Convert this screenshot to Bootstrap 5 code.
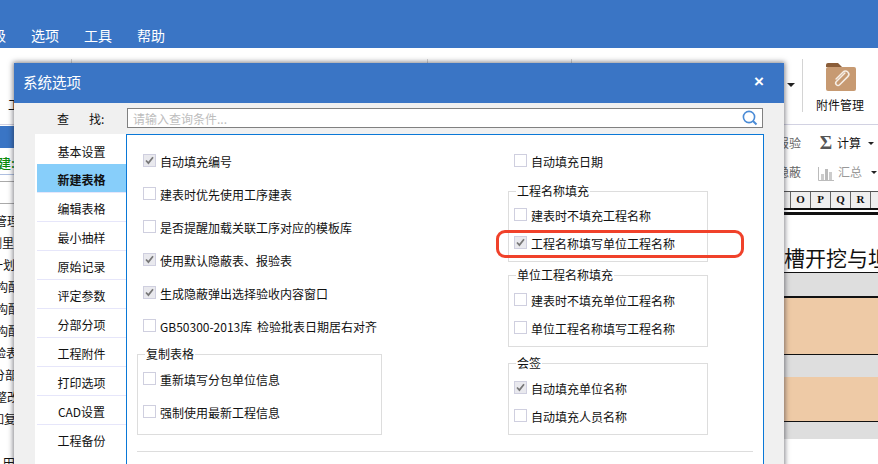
<!DOCTYPE html>
<html lang="zh">
<head>
<meta charset="utf-8">
<title>系统选项</title>
<link href="https://cdn.jsdelivr.net/npm/bootstrap@5.3.0/dist/css/bootstrap.min.css" rel="stylesheet">
<style>
html,body{margin:0;height:464px;width:878px;overflow:hidden;background:#fff}
body{font-family:"Noto Sans CJK SC","Liberation Sans",sans-serif;font-size:12px;line-height:16px;color:#111;position:relative}
.menu-strip{height:48px;background:#3a75c5;color:#fff;font-size:14px;line-height:20px;gap:25px;padding:0 0 3px 0;margin-left:-8px}
.ribbon-strip{height:77px;border-bottom:1px solid #d2d2e2;padding-top:11px}
.rb-sep{width:1px;height:53px;background:#d4d4d4;flex:none}
.rb-first{width:12px;margin:38px 0 0 8px;flex:none}
.rb-s1{margin-left:51px}.rb-s2{margin-left:355px}.rb-s3{margin-left:143px}
.rb-tri{margin:24px 7px 0 215px;width:0;height:0;border-left:4px solid transparent;border-right:4px solid transparent;border-top:4px solid #222;flex:none}
.rb-attach{width:50px;margin-left:13px;flex:none;padding-top:4px}
.rb-attach svg{display:block;margin:0 0 6px 10px}
.work-area{height:339px}
.left-strip{width:14px;flex:none;overflow:hidden;white-space:nowrap}
.ls-blue{height:22px;background:#3a75c5;margin-top:1px}
.ls-green{color:#0a8a0a;font-size:13px;line-height:16px;margin:7px 0 3px -2px;font-weight:500}
.ls-line1{height:1px;background:#aebfe0;margin-top:0}
.ls-line2{height:23px;border-top:1px solid #aaa;border-bottom:1px solid #aaa;margin-top:6px}
.ls-rows{padding-top:6px}
.ls-row{height:22px;line-height:22px}
.sh3{margin-left:3px}.sh4{margin-left:-4px}.sh5{margin-left:-5px}.sh6{margin-left:-6px}.sh7{margin-left:-7px}.sh8{margin-left:-8px}.sh9{margin-left:-9px}.sh10{margin-left:-10px}
.mid-gap{width:770px;flex:none}
.right-strip{width:94px;flex:none;overflow:hidden;white-space:nowrap}
.tool-row{height:18px;line-height:18px}
.tool-row.r1{margin-top:9px}.tool-row.r2{margin-top:11px}
.tool-cut{margin-left:-7px;width:24px;flex:none;color:#666}
.tool-ic{margin-left:17px;width:16px;flex:none;text-align:center}
.sigma{font-family:"Liberation Serif",serif;font-size:19px;font-weight:700;color:#555}
.tool-lab{margin-left:3px;width:24px;flex:none}
.tool-gray{color:#999;margin-left:4px}
.tool-tri{width:0;height:0;border-left:3px solid transparent;border-right:3px solid transparent;border-top:3px solid #222;margin-left:7px}
.tool-row.r2 .tool-tri{margin-left:9px}
.col-heads{height:17px;margin-top:10px;border-top:1px solid #555;background:#efefef;font-family:"Liberation Serif",serif;font-weight:700;font-size:11px;line-height:15px;text-align:center}
.col-heads span{width:20px;flex:none;border-right:1px solid #666}
.col-heads span:first-child{width:7px}
.col-heads span:last-child{border-right:0}
.thick-lines{height:7px;border-top:2px solid #111;border-bottom:3px solid #111}
.doc-title{height:58px;border-bottom:1px solid #111;font-size:21px;line-height:28px;padding-top:28px;color:#111}
.doc-gray{background:#dedede}
.doc-peach{background:#eecaa6}
.dg1{height:23px;border-bottom:2px solid #111;box-sizing:content-box}
.dp1{height:56px;border-bottom:1px solid #111;box-sizing:content-box}
.dg2{height:22px}
.dp2{height:44px;border-bottom:1px solid #111;box-sizing:content-box}
.dg3{height:17px}

.opt-dialog{position:absolute;left:14px;top:63px;width:770px;height:410px;background:#f0f0f0;box-shadow:0 0 5px 1px rgba(30,30,40,.55)}
.dlg-head{height:40px;background:#3a75c5;color:#fff;font-size:14.5px;padding:0 20px 2px 9px}
.dlg-x{font-size:17px;line-height:20px;font-family:"Liberation Sans",sans-serif;font-weight:700}
.find-row{height:31px;padding-top:5px}
.find-lab{width:113px;flex:none;padding:3px 0 0 43px;white-space:nowrap}
.find-gap{display:inline-block;width:20px}
.find-box{width:636px;height:20px;border:1px solid #808080;background:#fff;flex:none;padding:0 4px 0 5px;color:#bdbdbd;line-height:19px}
.dlg-main{height:340px;padding-left:21px}
.nav-pane{width:91px;flex:none;background:#fff;padding:2px 0 0 2px}
.nav-entry{height:29px;border:0;border-left:1px solid #e6e6fa;border-bottom:1px solid #e6e6fa;background:#fff;text-align:center;line-height:31px;color:#111;padding:0;border-radius:0!important;font-size:12px}
.nav-entry.active{background:#87cefa;font-weight:700;color:#111;border-color:#e6e6fa}
.opt-pane{width:638px;flex:none;background:#fff;border:1px solid #0a78d7;padding:19px 0 0 10px}
.opt-left{width:245px;flex:none}
.opt-right{width:200px;margin-left:126px;flex:none}
.opt-line{height:13px;margin:0 0 20px;padding:0;min-height:0;gap:4px;white-space:nowrap}
.opt-line .form-check-input{width:13px;height:13px;margin:0;flex:none;float:none;border:1px solid #cfcfdf;border-radius:0;background-color:#fff;box-shadow:none}
.opt-line .form-check-input:checked{background-color:#e9e9ee;border-color:#cfcfdf;background-size:13px 13px;background-image:url("data:image/svg+xml,%3csvg xmlns='http://www.w3.org/2000/svg' viewBox='0 0 13 13'%3e%3cpath fill='none' stroke='%23777' stroke-width='1.7' d='M3 6.5l2.4 2.6L10 3.2'/%3e%3c/svg%3e")}
.opt-line .form-check-label{line-height:16px;margin-top:3px;word-spacing:2px}
.pad6{padding-left:6px}
.opt-set{border:1px solid #ddd;margin:0;padding:0 0 0 5px;min-width:0}
.opt-set legend{float:none;width:auto;font-size:12px;line-height:16px;margin:0 0 0 2px;padding:0 1px}
.set-copy{margin-top:-6px;height:89px}
.set-a{margin-top:-4px;height:79px}
.set-b{margin-top:5px;height:80px}
.set-c{margin-top:8px;height:80px}
.set-copy .opt-line:first-of-type{margin-top:10px}
.set-a .opt-line,.set-b .opt-line,.set-c .opt-line{margin-bottom:15px}
.set-a .opt-line:first-of-type{margin-top:9px}
.set-b .opt-line:first-of-type{margin-top:10px}
.set-c .opt-line:first-of-type{margin-top:10px}
.red-ring{position:absolute;left:-18px;top:-6px;width:248px;height:28px;border:3px solid #f0412a;border-radius:9px}
.ring-host{position:relative}
.opt-rule{height:1px;background:#ddd;margin:16px 10px 0 0}
</style>
</head>
<body>
<div class="menu-strip d-flex align-items-end">
  <span>级</span><span>选项</span><span>工具</span><span>帮助</span>
</div>
<div class="ribbon-strip d-flex align-items-start">
  <span class="rb-first">工</span>
  <span class="rb-sep rb-s1"></span>
  <span class="rb-sep rb-s2"></span>
  <span class="rb-sep rb-s3"></span>
  <span class="rb-tri"></span>
  <span class="rb-sep"></span>
  <div class="rb-attach">
    <svg width="30" height="28" viewBox="0 0 30 28">
      <path d="M0 2a2 2 0 0 1 2-2h10l4 4H0z" fill="#8a5d38"/>
      <rect x="0" y="4" width="30" height="24" rx="2" fill="#c79a72"/>
      <g transform="translate(15 16) rotate(-45)"><path d="M7 -1.500H-5a2.300 2.300 0 0 0 0 4.600H6.500a3.300 3.300 0 0 0 0-6.600H-3.500" fill="none" stroke="#f6eee6" stroke-width="1.500" stroke-linecap="round"/></g>
    </svg>
    附件管理
  </div>
</div>
<div class="work-area d-flex">
  <div class="left-strip">
    <div class="ls-blue"></div>
    <div class="ls-green">建:</div>
    <div class="ls-line1"></div>
    <div class="ls-line2"></div>
    <div class="ls-rows">
      <div class="ls-row sh5">管理</div>
      <div class="ls-row sh10">测里</div>
      <div class="ls-row sh9">一划</div>
      <div class="ls-row sh4">构配</div>
      <div class="ls-row sh4">构配</div>
      <div class="ls-row sh4">构配</div>
      <div class="ls-row sh6">验表</div>
      <div class="ls-row sh7">分部</div>
      <div class="ls-row sh5">整改</div>
      <div class="ls-row sh8">如复</div>
      <div class="ls-row"></div>
      <div class="ls-row sh3">田</div>
    </div>
  </div>
  <div class="mid-gap"></div>
  <div class="right-strip">
    <div class="tool-row r1 d-flex align-items-center">
      <span class="tool-cut">报验</span>
      <span class="tool-ic sigma">Σ</span>
      <span class="tool-lab">计算</span>
      <span class="tool-tri"></span>
    </div>
    <div class="tool-row r2 d-flex align-items-center">
      <span class="tool-cut">隐蔽</span>
      <span class="tool-ic">
        <svg width="16" height="14" viewBox="0 0 16 14"><path d="M.5 0v13.500H16" fill="none" stroke="#bbb"/><rect x="3" y="7" width="3" height="6" fill="#ccc"/><rect x="7" y="2" width="3" height="11" fill="#bbb"/><rect x="11" y="5" width="3" height="8" fill="#ccc"/></svg>
      </span>
      <span class="tool-lab tool-gray">汇总</span>
      <span class="tool-tri"></span>
    </div>
    <div class="col-heads d-flex"><span></span><span>O</span><span>P</span><span>Q</span><span>R</span><span>:</span></div>
    <div class="thick-lines"></div>
    <div class="doc-title">槽开挖与坦</div>
    <div class="doc-gray dg1"></div>
    <div class="doc-peach dp1"></div>
    <div class="doc-gray dg2"></div>
    <div class="doc-peach dp2"></div>
    <div class="doc-gray dg3"></div>
  </div>
</div>

<div class="opt-dialog">
  <div class="dlg-head d-flex align-items-center justify-content-between">
    <span>系统选项</span><span class="dlg-x">×</span>
  </div>
  <div class="find-row d-flex">
    <div class="find-lab">查<span class="find-gap"></span>找:</div>
    <div class="find-box d-flex align-items-center justify-content-between">
      <span>请输入查询条件...</span>
      <svg width="16" height="16" viewBox="0 0 16 16"><circle cx="7" cy="7" r="5.600" fill="none" stroke="#4a8bd6" stroke-width="1.600"/><path d="M11 11l3.500 3.500" stroke="#4a8bd6" stroke-width="2"/></svg>
    </div>
  </div>
  <div class="dlg-main d-flex">
    <div class="nav-pane">
      <div class="list-group list-group-flush">
        <div class="list-group-item nav-entry">基本设置</div>
        <div class="list-group-item nav-entry active">新建表格</div>
        <div class="list-group-item nav-entry">编辑表格</div>
        <div class="list-group-item nav-entry">最小抽样</div>
        <div class="list-group-item nav-entry">原始记录</div>
        <div class="list-group-item nav-entry">评定参数</div>
        <div class="list-group-item nav-entry">分部分项</div>
        <div class="list-group-item nav-entry">工程附件</div>
        <div class="list-group-item nav-entry">打印选项</div>
        <div class="list-group-item nav-entry">CAD设置</div>
        <div class="list-group-item nav-entry">工程备份</div>
      </div>
    </div>
    <div class="opt-pane">
      <div class="d-flex">
        <div class="opt-left">
          <div class="form-check opt-line d-flex align-items-center pad6"><input class="form-check-input" type="checkbox" checked><label class="form-check-label">自动填充编号</label></div>
          <div class="form-check opt-line d-flex align-items-center pad6"><input class="form-check-input" type="checkbox"><label class="form-check-label">建表时优先使用工序建表</label></div>
          <div class="form-check opt-line d-flex align-items-center pad6"><input class="form-check-input" type="checkbox"><label class="form-check-label">是否提醒加载关联工序对应的模板库</label></div>
          <div class="form-check opt-line d-flex align-items-center pad6"><input class="form-check-input" type="checkbox" checked><label class="form-check-label">使用默认隐蔽表、报验表</label></div>
          <div class="form-check opt-line d-flex align-items-center pad6"><input class="form-check-input" type="checkbox" checked><label class="form-check-label">生成隐蔽弹出选择验收内容窗口</label></div>
          <div class="form-check opt-line d-flex align-items-center pad6"><input class="form-check-input" type="checkbox"><label class="form-check-label">GB50300-2013库 检验批表日期居右对齐</label></div>
          <fieldset class="opt-set set-copy">
            <legend>复制表格</legend>
            <div class="form-check opt-line d-flex align-items-center"><input class="form-check-input" type="checkbox"><label class="form-check-label">重新填写分包单位信息</label></div>
            <div class="form-check opt-line d-flex align-items-center"><input class="form-check-input" type="checkbox"><label class="form-check-label">强制使用最新工程信息</label></div>
          </fieldset>
        </div>
        <div class="opt-right">
          <div class="form-check opt-line d-flex align-items-center pad6"><input class="form-check-input" type="checkbox"><label class="form-check-label">自动填充日期</label></div>
          <fieldset class="opt-set set-a">
            <legend>工程名称填充</legend>
            <div class="form-check opt-line d-flex align-items-center"><input class="form-check-input" type="checkbox"><label class="form-check-label">建表时不填充工程名称</label></div>
            <div class="form-check opt-line d-flex align-items-center ring-host"><input class="form-check-input" type="checkbox" checked><label class="form-check-label">工程名称填写单位工程名称</label><span class="red-ring"></span></div>
          </fieldset>
          <fieldset class="opt-set set-b">
            <legend>单位工程名称填充</legend>
            <div class="form-check opt-line d-flex align-items-center"><input class="form-check-input" type="checkbox"><label class="form-check-label">建表时不填充单位工程名称</label></div>
            <div class="form-check opt-line d-flex align-items-center"><input class="form-check-input" type="checkbox"><label class="form-check-label">单位工程名称填写工程名称</label></div>
          </fieldset>
          <fieldset class="opt-set set-c">
            <legend>会签</legend>
            <div class="form-check opt-line d-flex align-items-center"><input class="form-check-input" type="checkbox" checked><label class="form-check-label">自动填充单位名称</label></div>
            <div class="form-check opt-line d-flex align-items-center"><input class="form-check-input" type="checkbox"><label class="form-check-label">自动填充人员名称</label></div>
          </fieldset>
        </div>
      </div>
      <div class="opt-rule"></div>
    </div>
  </div>
</div>
<script src="https://cdn.jsdelivr.net/npm/bootstrap@5.3.0/dist/js/bootstrap.bundle.min.js"></script>
</body>
</html>
